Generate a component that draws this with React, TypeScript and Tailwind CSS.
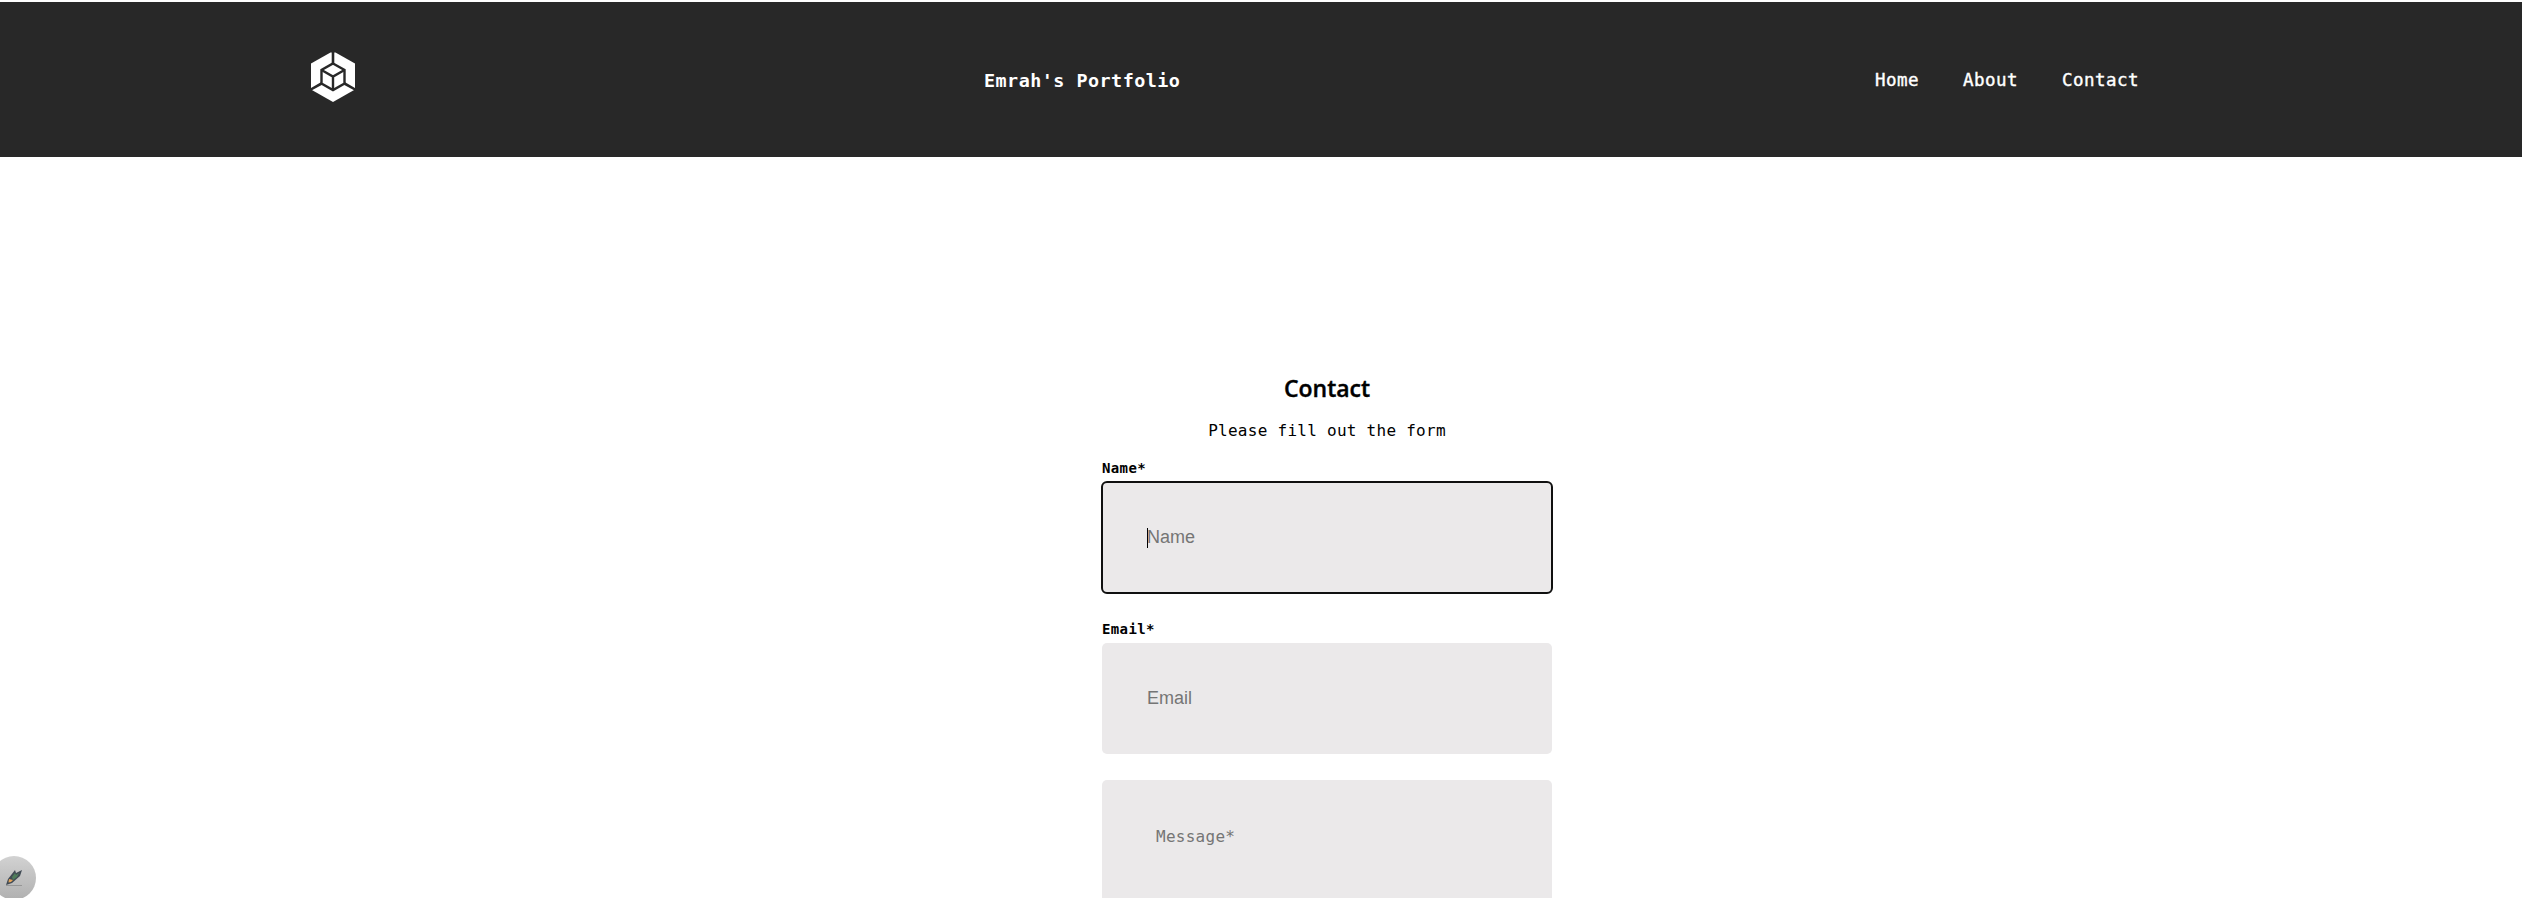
import React from "react";

const mono = "font-['DejaVu_Sans_Mono',monospace]";

function Logo() {
  return (
    <svg className="ml-[311px] mt-[50px] h-[50px] w-[44px] shrink-0" viewBox="0 0 44 50">
      <path d="M19.5 0.5H24.5L44 11.5V37.5L22 50 0 37.5V11.5Z" fill="#fff" />
      <g fill="none" stroke="#282828">
        <path d="M22-1V12M33.5 31.5 46 38.5M10.5 31.5-2 38.5" strokeWidth="2.6" />
        <path d="M22 11.5 33.5 18V31.5L22 38 10.5 31.5V18Z" strokeWidth="2.4" />
        <path d="M10.5 18 22 24.5 33.5 18M22 24.5V38" strokeWidth="2.4" />
      </g>
    </svg>
  );
}

function PenButton() {
  return (
    <button className="fixed -left-2 top-[856px] flex h-11 w-11 items-start rounded-full bg-linear-to-b from-[#d2d2d2] to-[#b0b0b0] pl-[13px] pt-[11px]" aria-label="Edit">
      <svg className="h-[20px] w-[18px]" viewBox="0 0 18 20">
        <path d="M1 18.5H17" stroke="#969696" strokeWidth="1" />
        <path d="M1 18 3 12 10 3 11 6 17 3 15 9 7 16Z" fill="#414b55" />
        <path d="M7 10 10 6 11 8 14 6 12 10 8 13Z" fill="#4e7c5a" />
        <path d="M4 12 8 13 6 15 3.5 15.5Z" fill="#e5a357" />
      </svg>
    </button>
  );
}

export default function App() {
  return (
    <div className="h-[898px] overflow-hidden bg-white pt-[2px] text-black">
      <header className={`${mono} flex h-[155px] w-[2522px] items-start bg-[#282828] text-white`}>
        <Logo />
        <p className="ml-[629px] mt-[65px] w-[220px] whitespace-nowrap text-[18.4px] font-bold leading-7 tracking-[0.48px]">
          Emrah's Portfolio
        </p>
        <nav className="ml-[671px] mt-[64px] flex gap-[44px] whitespace-nowrap text-[17.5px] leading-7 tracking-[0.46px] [-webkit-text-stroke:0.4px_white]">
          <a>Home</a>
          <a>About</a>
          <a>Contact</a>
        </nav>
      </header>
      <main className={`${mono} ml-[1102px] mt-[215px] flex w-[450px] flex-col`}>
        <h1 className="text-center font-['Open_Sans',sans-serif] text-[23px] font-semibold leading-8 [-webkit-text-stroke:0.4px_black]">Contact</h1>
        <p className="mt-[13px] text-center text-[16px] leading-7 tracking-[0.27px]">Please fill out the form</p>
        <label className="mt-[13px] h-[23px] text-[14px] font-bold leading-5 tracking-[0.37px]">Name*</label>
        <div className="-mx-px flex h-[113px] w-[452px] items-center rounded-[6px] border-2 border-[#101010] bg-[#ebe9ea] pl-[44px]">
          <span className="h-5 w-px bg-black" />
          <span className="-ml-px font-['Liberation_Sans',sans-serif] text-[18px] text-[#757575]">Name</span>
        </div>
        <label className="mt-[25px] h-[24px] text-[14px] font-bold leading-5 tracking-[0.37px]">Email*</label>
        <div className="flex h-[111px] items-center rounded-[5px] bg-[#ebe9ea] pl-[45px] font-['Liberation_Sans',sans-serif] text-[18px] text-[#757575]">
          Email
        </div>
        <div className="mt-[26px] h-[140px] rounded-[5px] bg-[#ebe9ea] pl-[54px] pt-[43px] text-[16px] leading-7 tracking-[0.27px] text-[#757575]">
          Message*
        </div>
      </main>
      <PenButton />
    </div>
  );
}
